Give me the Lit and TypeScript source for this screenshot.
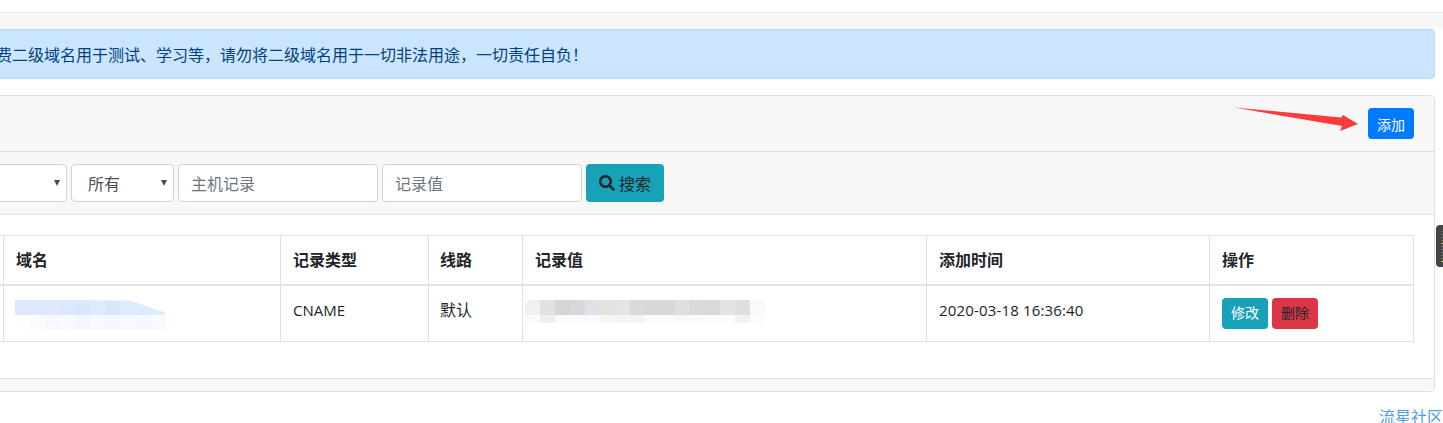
import { LitElement, html, css } from "lit";
import { customElement } from "lit/decorators.js";

const blurTop = ["#f1f1f1","#dfe2e1","#d6d4d4","#d7d8de","#dfe1e4","#e3e3e0","#e1e6e6","#d9d9d9","#d8d8da","#d8d8da","#dfdfdd","#dadade","#d9d9db","#e3e3e3","#dfdfdf","#f8f9fb"];
const blurBottom = ["#f9f9f9","#eeeeee","#fafaf7","#fafafa","#f9f9f9","#f6f6f6","#f5f5f5","#f3f3f3","#fcfcfc","#fafafa","#f9f9f9","#fbfbfb","#fbfbfb","#fcfcfc","#f2f2f2","#fcfcfd"];
const domainTop = ["#dbe8fd","#dde9fd","#dee9fd","#dce8fd","#dae7fd","#dfeafd","#dae7fd","#dfeafe","#deeafe","#e1ecfe"];
const domainBottom = ["#fdfefd","#f9fbff","#f6f9ff","#f8faff","#f3f7ff","#f6f9ff","#f4f8ff","#f6f9ff","#f5f8ff","#f6f9ff"];

@customElement("app-root")
export class AppRoot extends LitElement {
  static styles = css`
    :host { display: block; width: 1443px; height: 423px; overflow: hidden; position: relative; background: #fff;
      font-family: "Noto Sans CJK SC", "Open Sans", sans-serif; font-size: 16px; color: #212529; }
    * { box-sizing: border-box; }
    .nav { height: 13px; background: #fff; border-bottom: 1px solid #e7e7e7; }
    .content { margin-left: -100px; padding: 16px 8px 0 0; background: linear-gradient(#f6f6f6 0, #f8f8f8 16px, #fff 16px); }
    .alert { height: 50px; background: #cce5ff; border: 1px solid #b8daff; border-radius: 4px; color: #004085;
      padding-left: 79px; display: flex; align-items: center; white-space: nowrap; }
    .card { margin-top: 16px; border: 1px solid #dfdfdf; border-radius: 4px; background: #fff; }
    .head { height: 56px; background: #f7f7f7; border-bottom: 1px solid #dfdfdf; padding: 12px 20px; display: flex; justify-content: flex-end; }
    .filters { height: 63px; background: #f7f7f7; border-bottom: 1px solid #dfdfdf; padding: 12px 0 12px 38px; display: flex; gap: 4px; }
    .sel { position: relative; height: 38px; }
    .sel select { appearance: none; width: 100%; height: 38px; border: 1px solid #ced4da; border-radius: 4px; background: #fff;
      color: #495057; font: inherit; padding: 0 16px; }
    .sel::after { content: ""; position: absolute; right: 7px; top: 16px; border: 3px solid transparent; border-top: 6px solid #444b52; border-bottom: 0; }
    .s1 { width: 128px; }
    .s2 { width: 103px; }
    input { width: 200px; height: 38px; border: 1px solid #ced4da; border-radius: 4px; background: #fff; font: inherit; padding: 0 12px; color: #495057; }
    input::placeholder { color: #6c757d; opacity: 1; }
    .btn { border: 1px solid transparent; border-radius: 4px; font: inherit; display: inline-flex; align-items: center; justify-content: center; padding: 0; }
    .sm { width: 46px; height: 31px; font-size: 14px; }
    .primary { background: #007bff; color: #fff; }
    .info { background: #17a2b8; color: #fff; }
    .danger { background: #dc3545; color: #212529; }
    .search { width: 78px; height: 38px; background: #17a2b8; color: #212529; gap: 4px; }
    .search svg { width: 16px; height: 16px; display: block; }
    .body { height: 164px; padding: 20px 21px 0 20px; background: #fff; border-bottom: 1px solid #dfdfdf; }
    table { border-collapse: collapse; table-layout: fixed; width: 1493px; }
    th, td { border: 1px solid #dee2e6; padding: 0 12px; text-align: left; white-space: nowrap; line-height: 24px; }
    th { height: 49px; padding-bottom: 1px; border-bottom-width: 2px; font-weight: 700; }
    th:nth-child(4), td:nth-child(4) { padding-left: 11px; }
    td { height: 57px; vertical-align: top; padding-top: 12px; font-family: "Open Sans", "Noto Sans CJK SC", sans-serif; font-size: 15px; }
    td.cjk { font-family: "Noto Sans CJK SC", sans-serif; font-size: 16px; padding-top: 11px; }
    .time { letter-spacing: 0.16px; }
    .blur { display: grid; margin-top: 2px; position: relative; width: 240px; }
    .value { margin-left: -10px; border-radius: 6px 0 0 6px; overflow: hidden; }
    .domain { margin-left: -1px; width: 150px; clip-path: polygon(0 0, 115px 1px, 150px 13px, 150px 30px, 0 30px); }
    .row { display: flex; }
    .tile { width: 15px; flex: none; }
    .t1 { height: 15px; }
    .t2 { height: 8px; }
    .domain .t2 { height: 15px; }
    .mark { position: absolute; left: 140px; top: 7px; width: 4px; height: 2px; background: #2f8fff; }
    .ops { display: flex; gap: 4px; }
    .foot { height: 12px; background: #f7f7f7; border-radius: 0 0 4px 4px; }
    .credit { margin: 12px -8px 0 0; text-align: right; color: #4d9fea; line-height: 24px; }
    .arrow { position: absolute; left: 1230px; top: 104px; width: 132px; height: 32px; }
    .tab { position: absolute; left: 1436px; top: 225px; width: 7px; height: 42px; border-radius: 4px 0 0 4px;
      background:
        linear-gradient(#f5a623, #f5a623) 5px 18px / 2px 1px no-repeat,
        linear-gradient(#a6e22e, #a6e22e) 5px 36px / 2px 1px no-repeat,
        repeating-linear-gradient(#6a6a6a 0 1px, transparent 1px 3px) 5px 6px / 2px 30px no-repeat,
        #444; }
  `;

  private tiles(colors: string[], cls: string) {
    return html`<div class="row">${colors.map((c) => html`<div class="tile ${cls}" style="background:${c}"></div>`)}</div>`;
  }

  render() {
    return html`
      <div class="nav"></div>
      <div class="content">
        <div class="alert">免费二级域名用于测试、学习等，请勿将二级域名用于一切非法用途，一切责任自负！</div>
        <div class="card">
          <div class="head"><button class="btn sm primary">添加</button></div>
          <div class="filters">
            <div class="sel s1"><select><option>所有</option></select></div>
            <div class="sel s2"><select><option>所有</option></select></div>
            <input placeholder="主机记录" />
            <input placeholder="记录值" />
            <button class="btn search">
              <svg viewBox="0 0 512 512"><path fill="#212529" d="M505 442.700L405.300 343c-4.500-4.500-10.600-7-17-7H372c27.600-35.300 44-79.700 44-128C416 93.100 322.900 0 208 0S0 93.100 0 208s93.100 208 208 208c48.300 0 92.700-16.400 128-44v16.300c0 6.400 2.500 12.500 7 17l99.700 99.700c9.400 9.400 24.600 9.400 33.900 0l28.300-28.300c9.400-9.400 9.400-24.600.1-34zM208 336c-70.700 0-128-57.200-128-128 0-70.700 57.200-128 128-128 70.700 0 128 57.200 128 128 0 70.700-57.200 128-128 128z"/></svg>
              搜索
            </button>
          </div>
          <div class="body">
            <table>
              <colgroup><col style="width:82px" /><col style="width:277px" /><col style="width:148px" /><col style="width:94px" /><col style="width:404px" /><col style="width:283px" /><col style="width:204px" /></colgroup>
              <thead><tr><th>ID</th><th>域名</th><th>记录类型</th><th>线路</th><th>记录值</th><th>添加时间</th><th>操作</th></tr></thead>
              <tbody><tr>
                <td>1</td>
                <td><div class="blur domain">${this.tiles(domainTop, "t1")}${this.tiles(domainBottom, "t2")}<div class="mark"></div></div></td>
                <td>CNAME</td>
                <td class="cjk">默认</td>
                <td><div class="blur value">${this.tiles(blurTop, "t1")}${this.tiles(blurBottom, "t2")}</div></td>
                <td class="time">2020-03-18 16:36:40</td>
                <td><div class="ops"><button class="btn sm info">修改</button><button class="btn sm danger">删除</button></div></td>
              </tr></tbody>
            </table>
          </div>
          <div class="foot"></div>
        </div>
        <div class="credit">流星社区</div>
      </div>
      <svg class="arrow" viewBox="1230 104 132 32"><polygon fill="#fb3c3c" points="1234,107.500 1341,117.500 1343,115 1358,124 1340,131 1342,126" /></svg>
      <div class="tab"></div>
    `;
  }
}
